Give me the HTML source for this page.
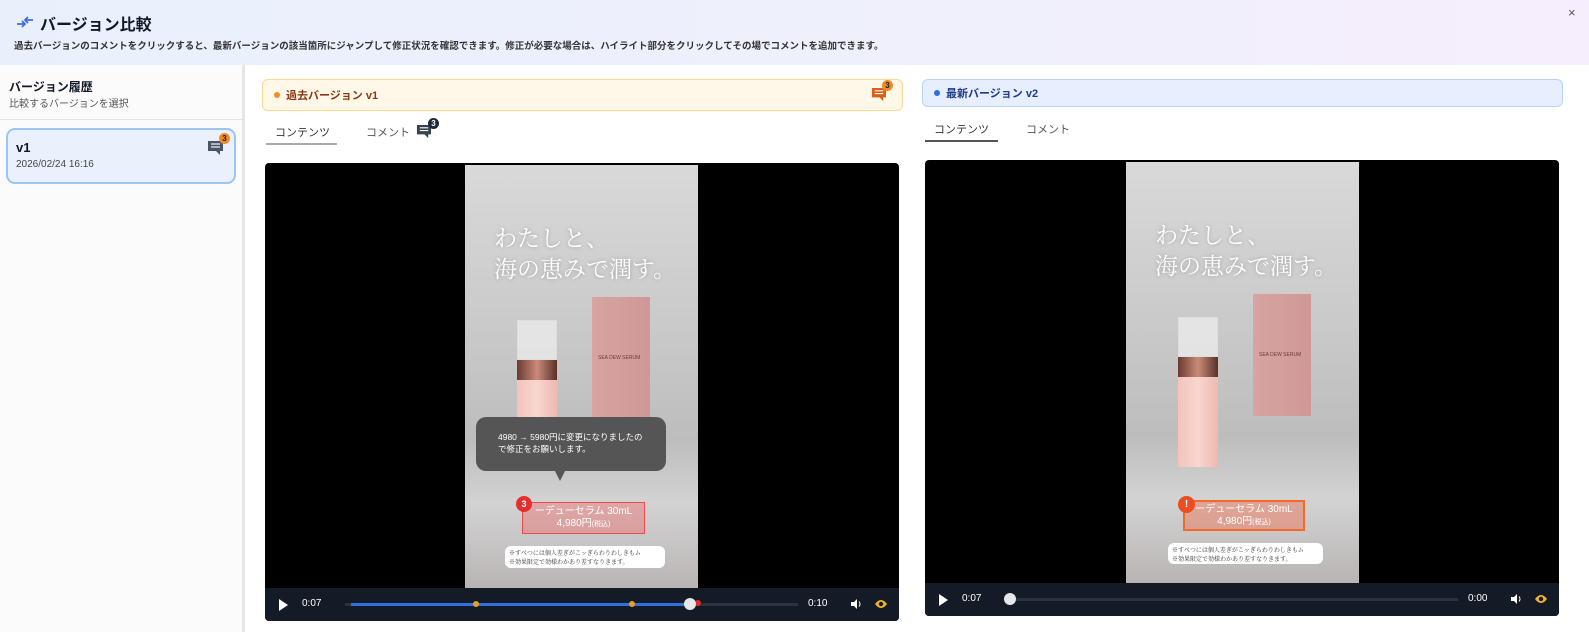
<!DOCTYPE html>
<html><head><meta charset="utf-8"><style>
*{box-sizing:border-box;margin:0;padding:0}
body{width:1589px;height:632px;overflow:hidden;background:#fff;font-family:"Liberation Sans","Noto Sans CJK JP",sans-serif;color:#111827;position:relative}
.abs{position:absolute}
.hdr{left:0;top:0;width:1589px;height:65px;background:linear-gradient(90deg,#e9f0fc,#eef0fc 50%,#f6eefc)}
.side{left:0;top:65px;width:245px;height:567px;background:#fbfbfc;border-right:3px solid #e4e6ea}
.img{background:linear-gradient(180deg,#d9d9d9 0%,#c9c9c9 40%,#bdbdbd 65%,#d3d3d3 80%,#b9b4b4 100%);overflow:hidden}
.ctrl{background:#151b26;color:#fff;font-size:10px}
.serif{font-family:"Noto Serif CJK SC","Liberation Serif",serif;color:#fff;font-size:23px;line-height:31px;white-space:nowrap;text-shadow:0 0 4px rgba(0,0,0,.25)}
</style></head><body>
<div class="abs hdr"></div>
<svg class="abs" style="left:16px;top:15px" width="18" height="14" viewBox="0 0 18 14"><path d="M1 9h8M6 6l3 3-3 3" stroke="#3b6fe0" stroke-width="1.8" fill="none"/><path d="M17 5H9M12 2L9 5l3 3" stroke="#3b6fe0" stroke-width="1.8" fill="none"/></svg>
<div class="abs" style="left:40px;top:11px;font-size:16px;font-weight:bold">バージョン比較</div>
<div class="abs" style="left:14px;top:38px;font-size:9.5px;color:#333;font-weight:bold">過去バージョンのコメントをクリックすると、最新バージョンの該当箇所にジャンプして修正状況を確認できます。修正が必要な場合は、ハイライト部分をクリックしてその場でコメントを追加できます。</div>
<div class="abs" style="left:1568px;top:5px;font-size:13px;color:#555">×</div>

<div class="abs side"></div>
<div class="abs" style="left:9px;top:78px;font-size:12px;font-weight:bold">バージョン履歴</div>
<div class="abs" style="left:9px;top:95px;font-size:10px;color:#555">比較するバージョンを選択</div>
<div class="abs" style="left:0;top:119px;width:245px;height:1px;background:#e2e4e8"></div>
<div class="abs" style="left:6px;top:128px;width:230px;height:56px;background:#eaf1fd;border:2px solid #9cc4f8;border-radius:9px"></div>
<div class="abs" style="left:16px;top:140px;font-size:13px;font-weight:bold">v1</div>
<div class="abs" style="left:16px;top:159px;font-size:10px;color:#444">2026/02/24 16:16</div>
<svg class="abs" style="left:207px;top:140px" width="17" height="16" viewBox="0 0 17 16"><path d="M1 1h15v10h-3v4l-4-4H1z" fill="#4b5563"/><path d="M4 4h9M4 7h9" stroke="#eaf1fd" stroke-width="1.2"/></svg>
<div class="abs" style="left:219px;top:133px;width:11px;height:11px;border-radius:50%;background:#f08a24;color:#222;font-size:8px;text-align:center;line-height:11px;font-weight:bold">3</div>

<!-- left panel -->
<div class="abs" style="left:262px;top:79px;width:641px;height:32px;background:#fff8e8;border:1px solid #fbd894;border-radius:6px"></div>
<div class="abs" style="left:274px;top:92px;width:6px;height:6px;border-radius:50%;background:#f28c28"></div>
<div class="abs" style="left:286px;top:87px;font-size:11px;font-weight:bold;color:#8a3a12">過去バージョン v1</div>
<svg class="abs" style="left:871px;top:87px" width="16" height="15" viewBox="0 0 17 16"><path d="M1 1h15v10h-3v4l-4-4H1z" fill="#d9601c"/><path d="M4 4h9M4 7h9" stroke="#fff8e8" stroke-width="1.2"/></svg>
<div class="abs" style="left:882px;top:80px;width:11px;height:11px;border-radius:50%;background:#f08a24;color:#222;font-size:8px;text-align:center;line-height:11px;font-weight:bold">3</div>
<div class="abs" style="left:275px;top:124px;font-size:11px;color:#333">コンテンツ</div>
<div class="abs" style="left:266px;top:143px;width:71px;height:2px;background:#aaa"></div>
<div class="abs" style="left:366px;top:124px;font-size:11px;color:#555">コメント</div>
<svg class="abs" style="left:416px;top:124px" width="16" height="15" viewBox="0 0 17 16"><path d="M1 1h15v10h-3v4l-4-4H1z" fill="#374151"/><path d="M4 4h9M4 7h9" stroke="#fff" stroke-width="1.2"/></svg>
<div class="abs" style="left:428px;top:118px;width:11px;height:11px;border-radius:50%;background:#1f2937;color:#fff;font-size:8px;text-align:center;line-height:11px;font-weight:bold">3</div>

<div class="abs" style="left:265px;top:163px;width:634px;height:458px;background:#000;border-radius:4px;overflow:hidden">
 <div class="abs img" style="left:200px;top:2px;width:233px;height:423px">
  <div class="abs serif" style="left:29px;top:56px">わたしと、<br>海の恵みで潤す。</div>
  <div class="abs" style="left:127px;top:132px;width:58px;height:122px;background:linear-gradient(90deg,#d7a4a2,#cf9896)"></div>
  <div class="abs" style="left:133px;top:190px;font-size:5px;color:#6a3a3a;white-space:nowrap">SEA DEW SERUM</div>
  <div class="abs" style="left:52px;top:155px;width:40px;height:40px;background:rgba(240,240,240,.7);border:1px solid #ddd"></div>
  <div class="abs" style="left:52px;top:195px;width:40px;height:20px;background:linear-gradient(90deg,#6b3a30,#c98b78,#5a3026)"></div>
  <div class="abs" style="left:52px;top:215px;width:40px;height:90px;background:linear-gradient(90deg,#f2c4bc,#f8d6cf,#eeb9b1)"></div>
  <div class="abs" style="left:57px;top:337px;width:123px;height:32px;background:rgba(235,110,110,.45);border:1.5px solid #f04a4a;color:#fff;font-size:10px;text-align:center;line-height:12px;padding-top:3px">ーデューセラム 30mL<br>4,980円<span style="font-size:7px">(税込)</span></div>
  <div class="abs" style="left:51px;top:331px;width:16px;height:16px;border-radius:50%;background:#e52e2e;color:#fff;font-size:9px;font-weight:bold;text-align:center;line-height:16px">3</div>
  <div class="abs" style="left:40px;top:381px;width:160px;height:22px;background:#fff;border-radius:6px;font-size:6px;color:#333;line-height:9px;padding:2px 4px;font-family:'Noto Serif CJK SC',serif;white-space:nowrap">※すべつには個人差ぎがこッぎらわりわしきもム<br>※効果限定で効様わかあり差すなりきます。</div>
 </div>
 <div class="abs" style="left:211px;top:254px;width:190px;height:54px;background:#555;border-radius:10px;color:#fff;font-size:8.5px;line-height:12px;padding:14px 0 0 22px">4980 → 5980円に変更になりましたの<br>で修正をお願いします。</div>
 <div class="abs" style="left:290px;top:308px;width:0;height:0;border-left:5px solid transparent;border-right:5px solid transparent;border-top:10px solid #555"></div>
 <div class="abs ctrl" style="left:0;top:425px;width:634px;height:33px">
  <div class="abs" style="left:14px;top:11px;width:0;height:0;border-top:6px solid transparent;border-bottom:6px solid transparent;border-left:9px solid #fff"></div>
  <div class="abs" style="left:37px;top:10px">0:07</div>
  <div class="abs" style="left:80px;top:15px;width:453px;height:3px;background:#2a3342"></div>
  <div class="abs" style="left:86px;top:15px;width:340px;height:3px;background:#2f6fe0"></div>
  <div class="abs" style="left:208px;top:13px;width:6px;height:6px;border-radius:50%;background:#e6a020"></div>
  <div class="abs" style="left:364px;top:13px;width:6px;height:6px;border-radius:50%;background:#e6a020"></div>
  <div class="abs" style="left:430px;top:12px;width:6px;height:6px;border-radius:50%;background:#e02a2a"></div>
  <div class="abs" style="left:419px;top:10px;width:12px;height:12px;border-radius:50%;background:#e5e7eb"></div>
  <div class="abs" style="left:543px;top:10px">0:10</div>
  <svg class="abs" style="left:585px;top:10px" width="12" height="12" viewBox="0 0 12 12"><path d="M1 4h3l3-3v10L4 8H1z" fill="#fff"/><path d="M9 3.5q2 2.5 0 5" stroke="#fff" fill="none"/></svg>
  <svg class="abs" style="left:609px;top:10px" width="14" height="12" viewBox="0 0 14 12"><path d="M1 6Q7-2 13 6Q7 14 1 6z" fill="#f0b429"/><circle cx="7" cy="6" r="2.2" fill="#151b26"/></svg>
 </div>
</div>

<!-- right panel -->
<div class="abs" style="left:922px;top:79px;width:641px;height:28px;background:#e7eefd;border:1px solid #b9d2f7;border-radius:6px"></div>
<div class="abs" style="left:934px;top:90px;width:6px;height:6px;border-radius:50%;background:#2f6fe0"></div>
<div class="abs" style="left:946px;top:85px;font-size:11px;font-weight:bold;color:#1e3a8a">最新バージョン v2</div>
<div class="abs" style="left:934px;top:121px;font-size:11px;color:#333">コンテンツ</div>
<div class="abs" style="left:925px;top:140px;width:73px;height:2px;background:#555"></div>
<div class="abs" style="left:1026px;top:121px;font-size:11px;color:#555">コメント</div>

<div class="abs" style="left:925px;top:160px;width:634px;height:456px;background:#000;border-radius:4px;overflow:hidden">
 <div class="abs img" style="left:201px;top:2px;width:233px;height:421px">
  <div class="abs serif" style="left:29px;top:56px">わたしと、<br>海の恵みで潤す。</div>
  <div class="abs" style="left:127px;top:132px;width:58px;height:122px;background:linear-gradient(90deg,#d7a4a2,#cf9896)"></div>
  <div class="abs" style="left:133px;top:190px;font-size:5px;color:#6a3a3a;white-space:nowrap">SEA DEW SERUM</div>
  <div class="abs" style="left:52px;top:155px;width:40px;height:40px;background:rgba(240,240,240,.7);border:1px solid #ddd"></div>
  <div class="abs" style="left:52px;top:195px;width:40px;height:20px;background:linear-gradient(90deg,#6b3a30,#c98b78,#5a3026)"></div>
  <div class="abs" style="left:52px;top:215px;width:40px;height:90px;background:linear-gradient(90deg,#f2c4bc,#f8d6cf,#eeb9b1)"></div>
  <div class="abs" style="left:57px;top:338px;width:122px;height:31px;background:rgba(235,120,90,.5);border:2px solid #f26a2a;color:#fff;font-size:10px;text-align:center;line-height:12px;padding-top:2px">ーデューセラム 30mL<br>4,980円<span style="font-size:7px">(税込)</span></div>
  <div class="abs" style="left:52px;top:334px;width:17px;height:17px;border-radius:50%;background:#ea4e22;color:#fff;font-size:10px;font-weight:bold;text-align:center;line-height:17px">!</div>
  <div class="abs" style="left:42px;top:381px;width:155px;height:21px;background:#fff;border-radius:6px;font-size:6px;color:#333;line-height:9px;padding:2px 4px;font-family:'Noto Serif CJK SC',serif;white-space:nowrap">※すべつには個人差ぎがこッぎらわりわしきもム<br>※効果限定で効様わかあり差すなりきます。</div>
 </div>
 <div class="abs ctrl" style="left:0;top:423px;width:634px;height:33px">
  <div class="abs" style="left:14px;top:11px;width:0;height:0;border-top:6px solid transparent;border-bottom:6px solid transparent;border-left:9px solid #fff"></div>
  <div class="abs" style="left:37px;top:10px">0:07</div>
  <div class="abs" style="left:85px;top:15px;width:448px;height:3px;background:#2a3342"></div>
  <div class="abs" style="left:79px;top:10px;width:12px;height:12px;border-radius:50%;background:#e5e7eb"></div>
  <div class="abs" style="left:543px;top:10px">0:00</div>
  <svg class="abs" style="left:585px;top:10px" width="12" height="12" viewBox="0 0 12 12"><path d="M1 4h3l3-3v10L4 8H1z" fill="#fff"/><path d="M9 3.5q2 2.5 0 5" stroke="#fff" fill="none"/></svg>
  <svg class="abs" style="left:609px;top:10px" width="14" height="12" viewBox="0 0 14 12"><path d="M1 6Q7-2 13 6Q7 14 1 6z" fill="#f0b429"/><circle cx="7" cy="6" r="2.2" fill="#151b26"/></svg>
 </div>
</div>
</body></html>
